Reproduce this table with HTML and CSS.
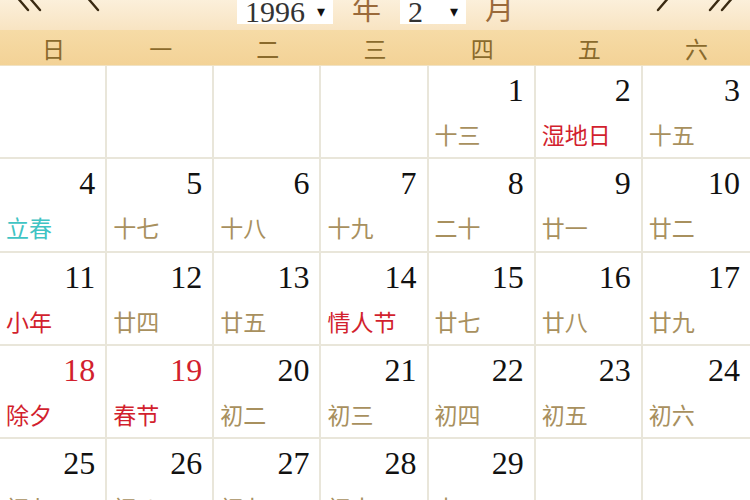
FILE: index.html
```html
<!DOCTYPE html>
<html lang="zh">
<head>
<meta charset="utf-8">
<link rel="stylesheet" href="styles.css">
</head>
<body>
<div class="topbar">
  <div class="nav nav-left">
    <svg class="arrow" width="30" height="30" viewBox="0 0 30 30"><polyline points="16,-12 4,2 16,16" /><polyline points="28,-12 16,2 28,16" /></svg>
    <svg class="arrow single" width="16" height="30" viewBox="0 0 16 30"><polyline points="14,-12 2,2 14,16" /></svg>
  </div>
  <div class="picker">
    <div class="select year"><span>1996</span><span class="caret">▾</span></div>
    <span class="unit">年</span>
    <div class="select month"><span>2</span><span class="caret">▾</span></div>
    <span class="unit">月</span>
  </div>
  <div class="nav nav-right">
    <svg class="arrow single" width="16" height="30" viewBox="0 0 16 30"><polyline points="2,-12 14,2 2,16" /></svg>
    <svg class="arrow" width="30" height="30" viewBox="0 0 30 30"><polyline points="2,-12 14,2 2,16" /><polyline points="14,-12 26,2 14,16" /></svg>
  </div>
</div>
<div class="weekdays">
  <div>日</div><div>一</div><div>二</div><div>三</div><div>四</div><div>五</div><div>六</div>
</div>
<div class="grid">
  <div class="cell"></div>
  <div class="cell"></div>
  <div class="cell"></div>
  <div class="cell"></div>
  <div class="cell"><div class="num">1</div><div class="lunar">十三</div></div>
  <div class="cell"><div class="num">2</div><div class="lunar red">湿地日</div></div>
  <div class="cell"><div class="num">3</div><div class="lunar">十五</div></div>

  <div class="cell"><div class="num">4</div><div class="lunar cyan">立春</div></div>
  <div class="cell"><div class="num">5</div><div class="lunar">十七</div></div>
  <div class="cell"><div class="num">6</div><div class="lunar">十八</div></div>
  <div class="cell"><div class="num">7</div><div class="lunar">十九</div></div>
  <div class="cell"><div class="num">8</div><div class="lunar">二十</div></div>
  <div class="cell"><div class="num">9</div><div class="lunar">廿一</div></div>
  <div class="cell"><div class="num">10</div><div class="lunar">廿二</div></div>

  <div class="cell"><div class="num">11</div><div class="lunar red">小年</div></div>
  <div class="cell"><div class="num">12</div><div class="lunar">廿四</div></div>
  <div class="cell"><div class="num">13</div><div class="lunar">廿五</div></div>
  <div class="cell"><div class="num">14</div><div class="lunar red">情人节</div></div>
  <div class="cell"><div class="num">15</div><div class="lunar">廿七</div></div>
  <div class="cell"><div class="num">16</div><div class="lunar">廿八</div></div>
  <div class="cell"><div class="num">17</div><div class="lunar">廿九</div></div>

  <div class="cell"><div class="num red">18</div><div class="lunar red">除夕</div></div>
  <div class="cell"><div class="num red">19</div><div class="lunar red">春节</div></div>
  <div class="cell"><div class="num">20</div><div class="lunar">初二</div></div>
  <div class="cell"><div class="num">21</div><div class="lunar">初三</div></div>
  <div class="cell"><div class="num">22</div><div class="lunar">初四</div></div>
  <div class="cell"><div class="num">23</div><div class="lunar">初五</div></div>
  <div class="cell"><div class="num">24</div><div class="lunar">初六</div></div>

  <div class="cell"><div class="num">25</div><div class="lunar">初七</div></div>
  <div class="cell"><div class="num">26</div><div class="lunar">初八</div></div>
  <div class="cell"><div class="num">27</div><div class="lunar">初九</div></div>
  <div class="cell"><div class="num">28</div><div class="lunar">初十</div></div>
  <div class="cell"><div class="num">29</div><div class="lunar">十一</div></div>
  <div class="cell"></div>
  <div class="cell"></div>
</div>
</body>
</html>
```
FILE: styles.css
```css
html, body {
  margin: 0;
  padding: 0;
}
body {
  width: 750px;
  height: 500px;
  overflow: hidden;
  background: #fff;
  font-family: "Liberation Serif", "Noto Sans CJK SC", serif;
}
.topbar {
  height: 42px;
  margin-top: -12px;
  background: linear-gradient(#fdf4e4, #f8e4c2);
  display: flex;
  align-items: center;
  justify-content: space-between;
}
.nav {
  width: 200px;
  display: flex;
  align-items: center;
  gap: 42px;
}
.nav-left { padding-left: 12px; }
.nav-right { justify-content: flex-end; padding-right: 12px; gap: 36px; }
.arrow { overflow: visible; }
.arrow polyline {
  fill: none;
  stroke: #3a2a12;
  stroke-width: 2.4;
  stroke-linecap: round;
}
.picker {
  display: flex;
  align-items: center;
  padding-bottom: 4px;
  padding-left: 20px;
}
.select {
  background: #fff;
  height: 34px;
  display: flex;
  align-items: center;
  justify-content: space-between;
  padding: 10px 8px 0 8px;
  box-sizing: border-box;
  font-family: "Liberation Serif", serif;
  font-size: 30px;
  line-height: 30px;
  color: #333;
}
.year { width: 96px; }
.month { width: 66px; }
.caret {
  font-family: "DejaVu Sans", sans-serif;
  font-size: 16px;
  color: #111;
}
.unit {
  font-family: "Noto Sans CJK SC", sans-serif;
  font-size: 29px;
  line-height: 1;
  color: #9a6a3a;
  margin: 0 19px 0 19px;
}
.weekdays {
  height: 36px;
  background: linear-gradient(#f6dba6, #f3d296);
  display: grid;
  grid-template-columns: repeat(7, 1fr);
  align-items: center;
  text-align: center;
  font-family: "Noto Sans CJK SC", sans-serif;
  font-size: 23px;
  color: #8a6a2c;
  box-shadow: inset 0 -1px 0 #f0e2c4;
}
.grid {
  display: grid;
  grid-template-columns: repeat(7, 1fr);
  grid-auto-rows: 93.3px;
}
.cell {
  border-right: 2px solid #e9e6da;
  border-bottom: 2px solid #e9e6da;
  box-sizing: border-box;
  padding: 7px 10px 0 6px;
}
.cell:nth-child(7n) { border-right: none; }
.num {
  text-align: right;
  font-size: 32px;
  line-height: 35px;
  color: #111;
}
.lunar {
  margin-top: 10px;
  font-family: "Noto Sans CJK SC", sans-serif;
  font-size: 23px;
  line-height: 32px;
  color: #a8905e;
}
.red { color: #d21f2e; }
.cyan { color: #3fc4c4; }
```
